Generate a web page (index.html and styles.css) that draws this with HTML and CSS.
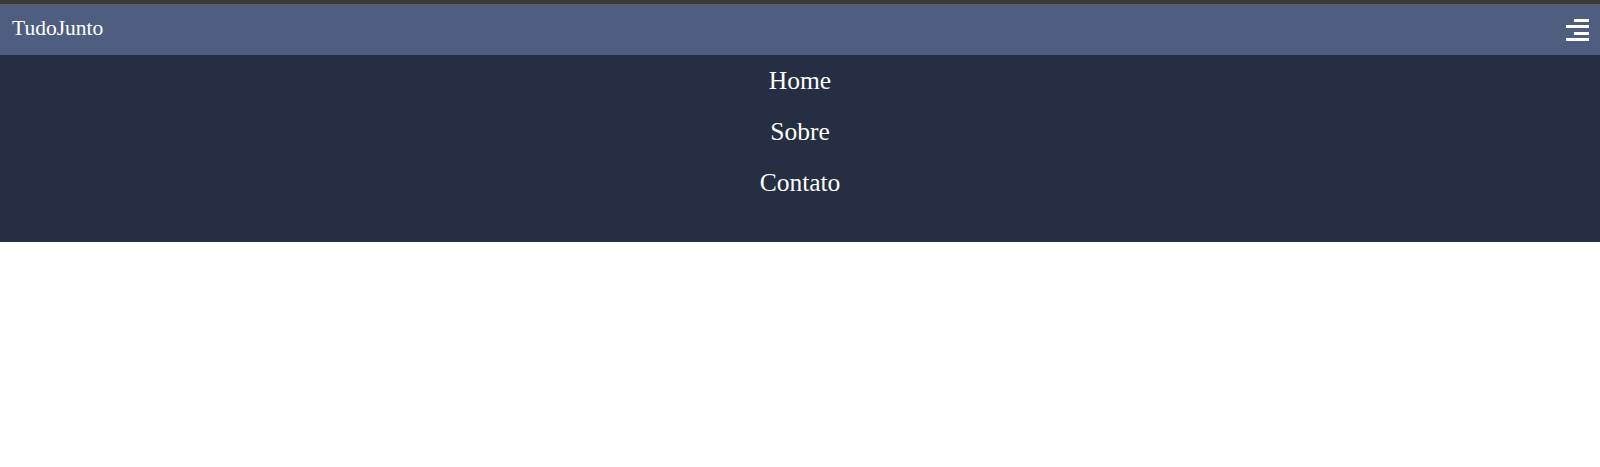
FILE: index.html
```html
<!DOCTYPE html>
<html lang="pt-BR">
<head>
<meta charset="utf-8">
<title>TudoJunto</title>
<link rel="stylesheet" href="styles.css">
</head>
<body>
<div class="topstrip"></div>
<header class="header">
  <span class="logo">TudoJunto</span>
  <button class="menu-btn" aria-label="Menu">
    <span class="bar short"></span>
    <span class="bar long"></span>
    <span class="bar short"></span>
    <span class="bar long"></span>
  </button>
</header>
<nav class="nav">
  <ul class="nav-list">
    <li class="nav-item">Home</li>
    <li class="nav-item">Sobre</li>
    <li class="nav-item">Contato</li>
  </ul>
</nav>
</body>
</html>
```

FILE: styles.css
```css
html, body {
  margin: 0;
  padding: 0;
  background: #ffffff;
  font-family: "Liberation Serif", "Times New Roman", serif;
}

.topstrip {
  height: 4px;
  background: #3a3a3a;
  border-bottom: 1px solid #5e5d55;
}

.header {
  height: 50px;
  background: #4f5e80;
  display: flex;
  align-items: center;
  justify-content: space-between;
  padding: 0 11px 0 12px;
  box-sizing: border-box;
}

.logo {
  color: #ffffff;
  font-size: 21.5px;
  line-height: 24px;
  margin-top: -5px;
}

.menu-btn {
  background: none;
  border: 0;
  padding: 0;
  margin-top: 0;
  width: 23px;
  display: flex;
  flex-direction: column;
  align-items: flex-end;
  gap: 3.5px;
}

.bar {
  display: block;
  height: 3px;
  background: #ffffff;
}

.bar.short { width: 15px; }
.bar.long { width: 23px; }

.nav {
  background: #252e42;
  padding: 0 0 34px;
}

.nav-list {
  list-style: none;
  margin: 0;
  padding: 0;
}

.nav-item {
  color: #ffffff;
  text-align: center;
  font-size: 25.5px;
  line-height: 29.5px;
  padding: 10.75px 0;
}
```
